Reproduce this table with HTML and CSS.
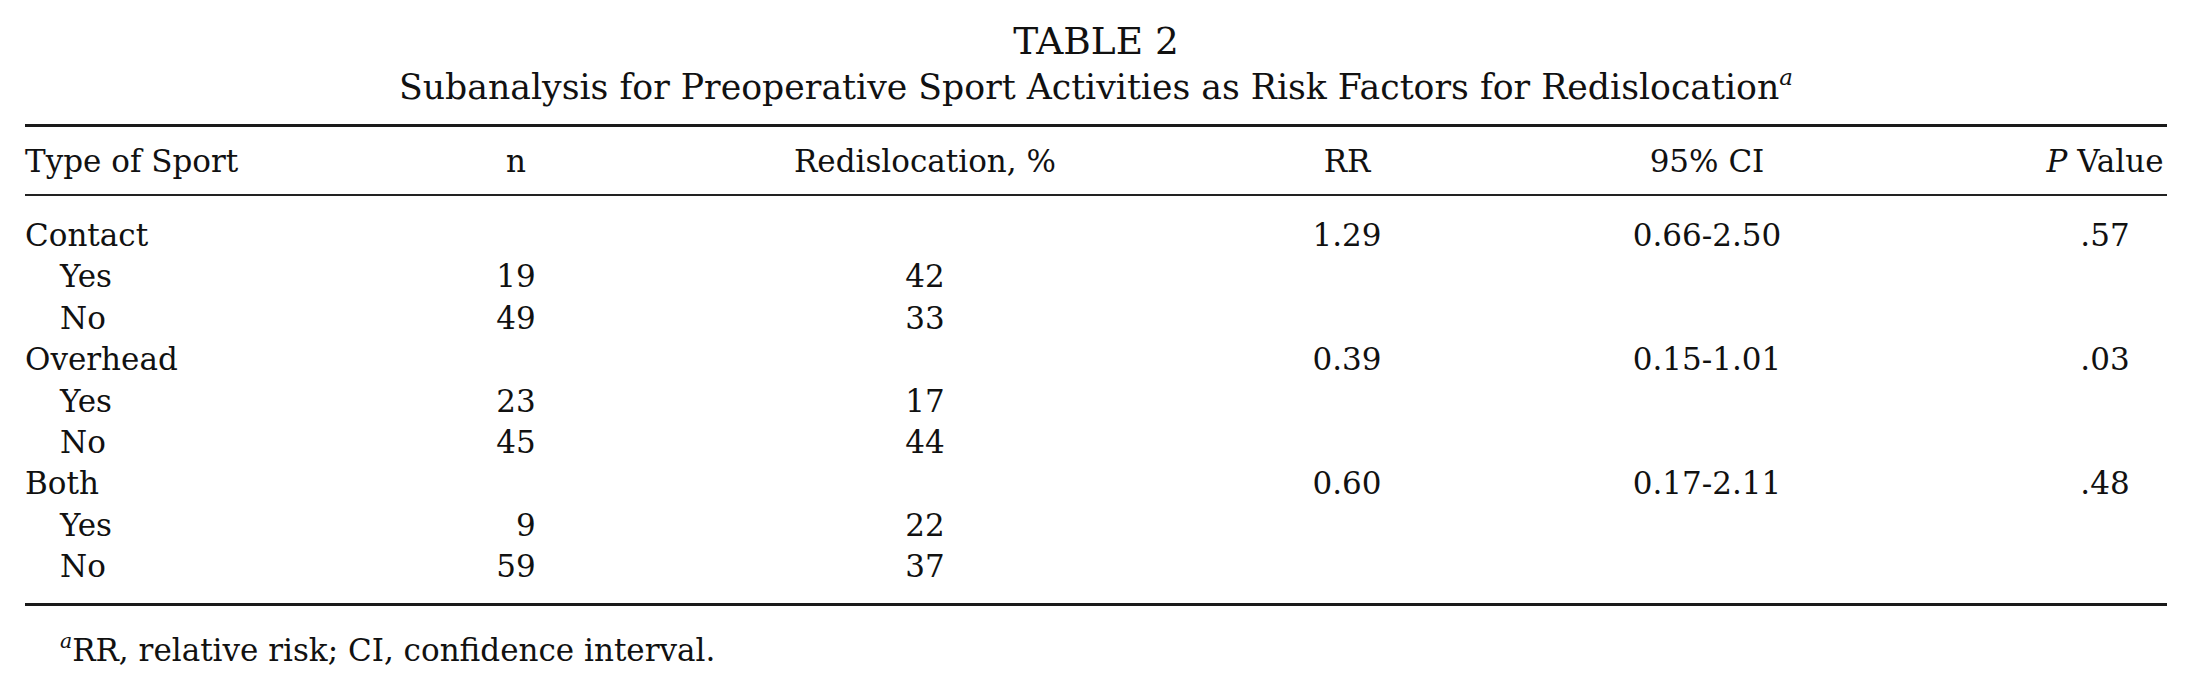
FILE: index.html
```html
<!DOCTYPE html>
<html lang="en">
<head>
<meta charset="utf-8">
<title>Table 2</title>
<link rel="stylesheet" href="styles.css">
</head>
<body>
<div class="page">
  <header class="caption">
    <div class="label">TABLE 2</div>
    <div class="title">Subanalysis for Preoperative Sport Activities as Risk Factors for Redislocation<sup class="note">a</sup></div>
  </header>
  <div class="table">
    <div class="thead grid">
      <div class="c1 left">Type of Sport</div>
      <div class="c2">n</div>
      <div class="c3">Redislocation, %</div>
      <div class="c4">RR</div>
      <div class="c5">95% CI</div>
      <div class="c6"><i>P</i> Value</div>
    </div>
    <div class="tbody grid">
      <div class="c1 left">Contact</div>
      <div class="c4">1.29</div>
      <div class="c5">0.66-2.50</div>
      <div class="c6">.57</div>

      <div class="c1 left sub">Yes</div>
      <div class="c2">19</div>
      <div class="c3">42</div>

      <div class="c1 left sub">No</div>
      <div class="c2">49</div>
      <div class="c3">33</div>

      <div class="c1 left">Overhead</div>
      <div class="c4">0.39</div>
      <div class="c5">0.15-1.01</div>
      <div class="c6">.03</div>

      <div class="c1 left sub">Yes</div>
      <div class="c2">23</div>
      <div class="c3">17</div>

      <div class="c1 left sub">No</div>
      <div class="c2">45</div>
      <div class="c3">44</div>

      <div class="c1 left">Both</div>
      <div class="c4">0.60</div>
      <div class="c5">0.17-2.11</div>
      <div class="c6">.48</div>

      <div class="c1 left sub">Yes</div>
      <div class="c2">&#8199;9</div>
      <div class="c3">22</div>

      <div class="c1 left sub">No</div>
      <div class="c2">59</div>
      <div class="c3">37</div>
    </div>
  </div>
  <p class="foot"><sup class="note">a</sup>RR, relative risk; CI, confidence interval.</p>
</div>
</body>
</html>
```
FILE: styles.css
```css
html, body {
  margin: 0;
  padding: 0;
  background: #ffffff;
}

body {
  font-family: "DejaVu Serif", "Liberation Serif", serif;
  color: #111111;
}

.page {
  padding: 17.5px 25px 0 25px;
}

.caption {
  text-align: center;
}

.label {
  font-size: 37.5px;
  line-height: 46px;
}

.title {
  font-size: 34.7px;
  line-height: 46px;
}

.note {
  font-style: italic;
  font-size: 0.66em;
  line-height: 0;
  vertical-align: 0.62em;
  font-weight: normal;
}

.table {
  margin-top: 14px;
  border-top: 3px solid #1a1a1a;
  border-bottom: 3px solid #1a1a1a;
}

.grid {
  display: grid;
  grid-template-columns: 300px 111px 160px 179px 300px 192px 160px 160px 240px 216px 124px;
  font-size: 31px;
  line-height: 41.375px;
  text-align: center;
  white-space: nowrap;
}

.thead {
  padding: 14.6px 0 12px 0;
  border-bottom: 2px solid #222222;
}

.tbody {
  padding: 18.6px 0 16px 0;
}

.c1 { grid-column: 1; }
.c2 { grid-column: 3; }
.c3 { grid-column: 5; }
.c4 { grid-column: 7; }
.c5 { grid-column: 9; }
.c6 { grid-column: 11; }

.left {
  text-align: left;
}

.sub {
  padding-left: 35px;
}

.foot {
  margin: 24px 0 0 0;
  padding-left: 35px;
  font-size: 31px;
  line-height: 40px;
}
```
